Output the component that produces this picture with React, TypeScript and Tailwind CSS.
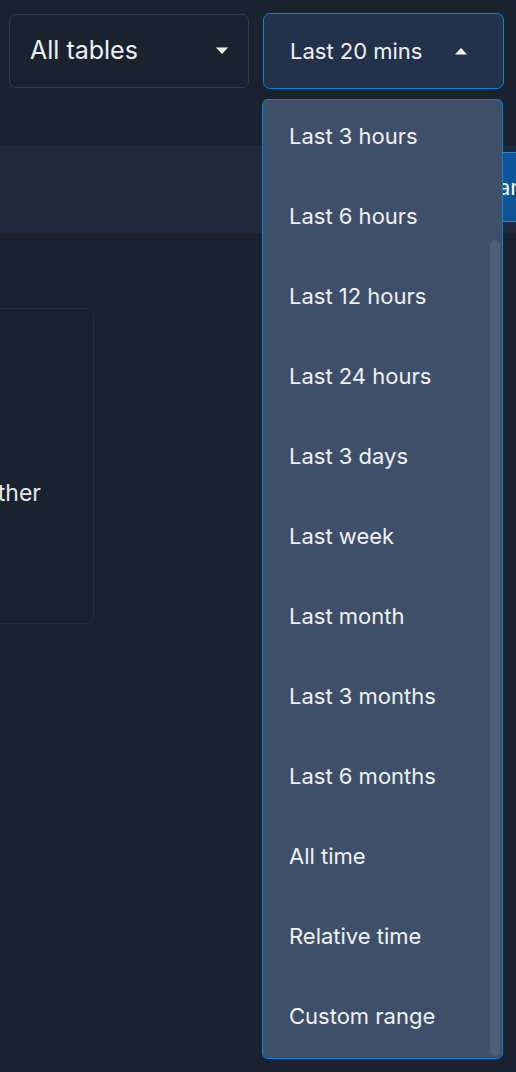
import React from "react";

const ranges = [
  "Last 3 hours",
  "Last 6 hours",
  "Last 12 hours",
  "Last 24 hours",
  "Last 3 days",
  "Last week",
  "Last month",
  "Last 3 months",
  "Last 6 months",
  "All time",
  "Relative time",
  "Custom range",
];

function Caret({ up }: { up?: boolean }) {
  return (
    <svg width="14" height="8" viewBox="0 0 14 8" className="shrink-0">
      <path d={up ? "M1 7.5 L7 1 L13 7.5 Z" : "M1 0.5 L7 7 L13 0.5 Z"} fill="#ffffff" />
    </svg>
  );
}

export default function App() {
  return (
    <div
      className="relative h-[1072px] w-[516px] overflow-hidden bg-[#1a2230] text-white"
      style={{ fontFamily: "Inter, 'Noto Sans', sans-serif" }}
    >
      {/* Filters */}
      <div className="flex gap-[14px] pl-[9px] pt-[13px]">
        <button className="mt-px flex h-[74px] w-[240px] items-center justify-between rounded-[7px] border border-[#2e3c52] bg-[#1a2230] pl-[20px] pr-[19px] text-[25px] text-[#eef1f5]">
          All tables
          <Caret />
        </button>
        <button className="flex h-[76px] w-[241px] items-center justify-between rounded-[7px] border border-[#0b84d0] bg-[#22324b] pl-[26px] pr-[35px] text-[22px] text-[#eef1f5]">
          Last 20 mins
          <Caret up />
        </button>
      </div>

      {/* Toolbar band behind the menu */}
      <div className="mt-[56px] flex h-[88px] items-start justify-end bg-[#1e293e] pt-[7px]">
        <div className="mr-[-60px] flex h-[70px] w-[110px] items-center rounded-[4px] border border-[#1f8bd8] bg-[#0e5496] pl-[4px] text-[22px]">
          Scan
        </div>
      </div>

      {/* Card peeking from the left */}
      <div className="ml-[-160px] mt-[75px] flex h-[316px] w-[254px] justify-end rounded-[6px] border border-[#1f2d47] pr-[52px] pt-[167px] text-[23px] text-[#e4e8ee]">
        Gather
      </div>

      {/* Time range menu */}
      <div className="absolute left-[262px] top-[99px] h-[960px] w-[241px] overflow-hidden rounded-[6px] border border-[#0b84d0] bg-[#3e5069]">
        <ul className="-mt-[4px]">
          {ranges.map((r) => (
            <li key={r} className="flex h-[80px] items-center pl-[26px] text-[22px] text-[#eef1f5]">
              {r}
            </li>
          ))}
        </ul>
        <div className="absolute bottom-[2px] right-[2px] top-[140px] w-[10px] rounded-full bg-[#4c5e78]" />
      </div>
    </div>
  );
}
